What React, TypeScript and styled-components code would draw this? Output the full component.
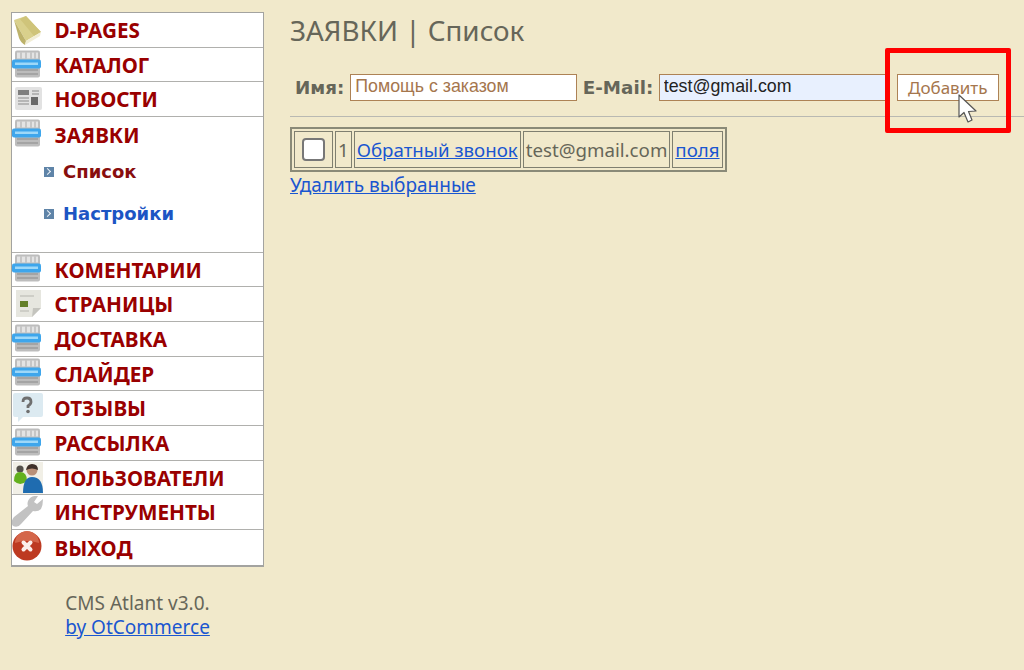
import React from "react";
import styled, { createGlobalStyle } from "styled-components";

const GlobalStyle = createGlobalStyle`
  html, body {
    margin: 0;
    padding: 0;
    background: #f1e9cb;
  }
  body {
    font-family: "Noto Sans", Tahoma, sans-serif;
    color: #666659;
  }
`;

const BookIcon = () => (
  <svg width="32" height="32" viewBox="0 0 32 32">
    <path d="M2 6 L14 2 L29 18 L14 27 Z" fill="#d9d08c" />
    <path d="M14 2 L29 18 L22 22 L8 5 Z" fill="#cfc47a" />
    <path d="M2 6 L14 27 L13 31 Q9 29 7 24 Z" fill="#bdb26a" />
    <path d="M14 27 L29 18 L28 22 L13 31 Z" fill="#f2eed6" />
  </svg>
);

const TableIcon = () => (
  <svg width="32" height="32" viewBox="0 0 32 32">
    <rect x="3" y="1.5" width="25" height="27" rx="2" fill="#bdbdbd" />
    <rect x="5" y="3.5" width="21" height="6" fill="#e4e4e4" />
    <path d="M9 3.5v6M14 3.5v6M19 3.5v6M23 3.5v6" stroke="#a8a8a8" />
    <rect x="5" y="20" width="21" height="6" fill="#a4a4a4" />
    <path d="M5 23h21" stroke="#d4d4d4" />
    <rect x="0" y="10.5" width="29" height="9" rx="2" fill="#3ea6ec" />
    <rect x="3" y="13.5" width="23" height="2.5" fill="#9ed8f8" />
  </svg>
);

const NewsIcon = () => (
  <svg width="32" height="32" viewBox="0 0 32 32">
    <rect x="3" y="4" width="27" height="23" rx="2" fill="#e2e2e2" />
    <rect x="6" y="7" width="11" height="5" fill="#7f7f7f" />
    <path d="M6 15h11M6 18h11M6 21h11M20 8h7M20 11h7" stroke="#a8a8a8" strokeWidth="1.3" />
    <rect x="19" y="14" width="7" height="8" fill="#6a6a6a" />
  </svg>
);

const PageIcon = () => (
  <svg width="32" height="32" viewBox="0 0 32 32">
    <path d="M4 2 H29 V20 L20 29 H4 Z" fill="#e6e6df" />
    <path d="M20 29 L21 20 H29 Z" fill="#c4c4be" />
    <path d="M8 13h8v6H8z" fill="#64802a" />
    <path d="M8 8h14M8 23h9" stroke="#c6c6c0" strokeWidth="1.3" />
  </svg>
);

const QuestionIcon = () => (
  <svg width="32" height="32" viewBox="0 0 32 32">
    <path d="M3 1 H29 Q31 1 31 3 V23 Q31 25 29 25 H11 L6 30 V25 H3 Q1 25 1 23 V3 Q1 1 3 1 Z" fill="#dceaf1" />
    <path d="M11 10 Q11 6 15 6 Q19 6 19 10 Q19 12 16 14 V16" fill="none" stroke="#6f6f6f" strokeWidth="2.8" />
    <circle cx="16" cy="19.5" r="1.8" fill="#6f6f6f" />
  </svg>
);

const UsersIcon = () => (
  <svg width="32" height="32" viewBox="0 0 32 32">
    <rect x="1" width="30" height="32" fill="#f1efe6" />
    <circle cx="8" cy="7" r="3.6" fill="#54504a" />
    <path d="M2 19 Q2 10 8 10 Q15 10 15 19 Q8 25 2 19 Z" fill="#63b01e" />
    <circle cx="20" cy="8" r="5.5" fill="#b99078" />
    <path d="M14 8 Q15 2 20 2 Q26 2 26 8 Q20 5 14 8 Z" fill="#3f3029" />
    <path d="M11 31 Q11 15 20 15 Q31 15 31 31 Z" fill="#1f6cb0" />
  </svg>
);

const WrenchIcon = () => (
  <svg width="32" height="32" viewBox="0 0 32 32">
    <path d="M31 3 L25 8 L22 6 L26 0 Q19 -1 16 5 Q15 8 16 10 L2 21 Q-2 26 1 30 Q6 32 9 28 L21 15 Q26 16 29 13 Q31 9 31 3 Z" fill="#c2c2c2" />
  </svg>
);

const ExitIcon = () => (
  <svg width="32" height="32" viewBox="0 0 32 32">
    <circle cx="15" cy="15" r="14.5" fill="#bd3a21" />
    <path d="M3 12 A12 12 0 0 1 27 12 Q15 8 3 12 Z" fill="#d4664a" />
    <path d="M11.5 11.5 L18.5 18.5 M18.5 11.5 L11.5 18.5" stroke="#fbeee9" strokeWidth="4" strokeLinecap="round" />
  </svg>
);

const menuTop = [
  { label: "D-PAGES", icon: <BookIcon /> },
  { label: "КАТАЛОГ", icon: <TableIcon /> },
  { label: "НОВОСТИ", icon: <NewsIcon /> },
];

const menuBottom = [
  { label: "КОМЕНТАРИИ", icon: <TableIcon /> },
  { label: "СТРАНИЦЫ", icon: <PageIcon /> },
  { label: "ДОСТАВКА", icon: <TableIcon /> },
  { label: "СЛАЙДЕР", icon: <TableIcon /> },
  { label: "ОТЗЫВЫ", icon: <QuestionIcon /> },
  { label: "РАССЫЛКА", icon: <TableIcon /> },
  { label: "ПОЛЬЗОВАТЕЛИ", icon: <UsersIcon /> },
  { label: "ИНСТРУМЕНТЫ", icon: <WrenchIcon /> },
  { label: "ВЫХОД", icon: <ExitIcon /> },
];

const App: React.FC = () => {
  return (
    <Page>
      <GlobalStyle />
      <Side>
        <Menu>
          {menuTop.map((item) => (
            <MenuRow key={item.label}>
              <IconBox>{item.icon}</IconBox>
              <MenuLabel>{item.label}</MenuLabel>
            </MenuRow>
          ))}
          <OpenGroup>
            <MenuRow>
              <IconBox>
                <TableIcon />
              </IconBox>
              <MenuLabel>ЗАЯВКИ</MenuLabel>
            </MenuRow>
            <SubList>
              <SubItem>
                <Bullet />
                <SubLabel $active>Список</SubLabel>
              </SubItem>
              <SubItem>
                <Bullet />
                <SubLabel>Настройки</SubLabel>
              </SubItem>
            </SubList>
          </OpenGroup>
          {menuBottom.map((item) => (
            <MenuRow key={item.label}>
              <IconBox>{item.icon}</IconBox>
              <MenuLabel>{item.label}</MenuLabel>
            </MenuRow>
          ))}
        </Menu>
        <Credits>
          CMS Atlant v3.0.
          <br />
          <Link href="#">by OtCommerce</Link>
        </Credits>
      </Side>

      <Main>
        <Title>ЗАЯВКИ | Список</Title>
        <AddForm>
          <FieldLabel>Имя:</FieldLabel>
          <TextInput defaultValue="Помощь с заказом" />
          <FieldLabel>E-Mail:</FieldLabel>
          <TextInput $autofill defaultValue="test@gmail.com" />
          <AddButton type="button">Добавить</AddButton>
        </AddForm>
        <Rule />
        <OrdersTable>
          <tbody>
            <tr>
              <CheckCell>
                <CheckBox />
              </CheckCell>
              <Cell>1</Cell>
              <Cell>
                <Link href="#">Обратный звонок</Link>
              </Cell>
              <Cell>test@gmail.com</Cell>
              <Cell>
                <Link href="#">поля</Link>
              </Cell>
            </tr>
          </tbody>
        </OrdersTable>
        <DeleteLink href="#">Удалить выбранные</DeleteLink>
      </Main>

      <Highlight />
      <Pointer viewBox="0 0 22 30" width="22" height="30">
        <path
          d="M2 1 L2 23 L7 18.5 L11 28 L15 26 L11.5 17.5 L19 17 Z"
          fill="#fff"
          stroke="#555"
          strokeWidth="1.2"
          strokeLinejoin="round"
        />
      </Pointer>
    </Page>
  );
};

export default App;

const Page = styled.div`
  position: relative;
  display: flex;
  align-items: flex-start;
  width: 1024px;
  height: 670px;
  overflow: hidden;
  padding: 12px 0 0 11px;
  box-sizing: border-box;
  background: #f1e9cb;
`;

const Side = styled.div`
  width: 253px;
  flex: none;
`;

const Menu = styled.div`
  background: #fff;
  border: 1px solid #a3a3a0;
  border-bottom-width: 2px;
`;

const MenuRow = styled.div`
  display: flex;
  align-items: center;
  height: 34.7px;
  box-sizing: border-box;
  border-bottom: 1px solid #b0b0ad;
  &:last-child {
    border-bottom: none;
  }
`;

const IconBox = styled.div`
  display: flex;
  width: 42.5px;
  flex: none;
  filter: blur(0.6px);
`;

const MenuLabel = styled.span`
  font-family: "Noto Sans", sans-serif;
  font-size: 20.7px;
  font-weight: 700;
  color: #990000;
  line-height: 1;
  padding-top: 1px;
`;

const OpenGroup = styled.div`
  height: 135.5px;
  box-sizing: border-box;
  border-bottom: 1px solid #b0b0ad;
  ${MenuRow} {
    border-bottom: none;
  }
`;

const SubList = styled.div`
  display: flex;
  flex-direction: column;
  gap: 18px;
  padding: 8px 0 0 32px;
`;

const SubItem = styled.div`
  display: flex;
  align-items: center;
  gap: 9px;
  height: 24px;
`;

const Bullet = styled.span`
  position: relative;
  width: 10px;
  height: 10px;
  background: #5f84a8;
  &::after {
    content: "";
    position: absolute;
    left: 2px;
    top: 2px;
    width: 4px;
    height: 4px;
    border-top: 1.5px solid #eef3f7;
    border-right: 1.5px solid #eef3f7;
    transform: translateX(-1px) rotate(45deg);
  }
`;

const SubLabel = styled.span<{ $active?: boolean }>`
  font-family: "DejaVu Sans", sans-serif;
  font-size: 18px;
  font-weight: 700;
  color: ${(p) => (p.$active ? "#880e0e" : "#1c55c4")};
`;

const Credits = styled.div`
  margin-top: 24px;
  text-align: center;
  font-size: 19px;
  line-height: 24px;
  color: #666659;
`;

const Link = styled.a`
  color: #1a56d0;
  text-decoration: underline;
`;

const DeleteLink = styled(Link)`
  font-size: 19px;
`;

const Main = styled.div`
  flex: 1;
  padding: 0 0 0 26px;
  font-size: 18.7px;
  line-height: 25px;
`;

const Title = styled.h1`
  margin: 0;
  font-size: 27.8px;
  line-height: 37px;
  font-weight: 400;
  color: #666659;
`;

const AddForm = styled.form`
  display: flex;
  align-items: center;
  height: 30px;
  margin: 23px 0 0 5px;
`;

const FieldLabel = styled.label`
  font-family: "DejaVu Sans", sans-serif;
  font-size: 18.3px;
  font-weight: 700;
  color: #666659;
  margin-right: 6px;
  & ~ & {
    margin-left: 5.5px;
    margin-right: 5.5px;
  }
`;

const TextInput = styled.input<{ $autofill?: boolean }>`
  width: 227px;
  height: 27px;
  box-sizing: border-box;
  padding: 0 4px 2px;
  border: 1px solid #ad8255;
  border-radius: 0;
  outline: none;
  font-family: "Liberation Sans", sans-serif;
  font-size: 17.8px;
  color: ${(p) => (p.$autofill ? "#222" : "#a5764d")};
  background: ${(p) => (p.$autofill ? "#e8f0fe" : "#fff")};
`;

const AddButton = styled.button`
  width: 102px;
  height: 27px;
  margin: 1px 0 0 11px;
  padding: 0;
  border: 1px solid #ad8255;
  border-radius: 0;
  background: #fff;
  font-family: "Noto Sans", sans-serif;
  font-size: 17px;
  color: #a5764d;
`;

const Rule = styled.div`
  height: 1px;
  margin-top: 14px;
  background: #b9b9b2;
`;

const OrdersTable = styled.table`
  margin-top: 10px;
  border: 2px solid #8a8a78;
  border-spacing: 2.5px;
  border-collapse: separate;
`;

const Cell = styled.td`
  border: 1px solid #7f7f70;
  padding: 0 2px;
  height: 37px;
  box-sizing: border-box;
  line-height: 25px;
  white-space: nowrap;
`;

const CheckCell = styled(Cell)`
  width: 39px;
  text-align: center;
  padding: 0;
`;

const CheckBox = styled.span`
  display: block;
  width: 19px;
  height: 19px;
  margin: 0 auto;
  background: #fff;
  border: 2px solid #777;
  border-radius: 4px;
`;

const Highlight = styled.div`
  position: absolute;
  left: 885px;
  top: 48px;
  width: 126px;
  height: 85px;
  box-sizing: border-box;
  border: 5px solid #ff0000;
  border-radius: 2px;
`;

const Pointer = styled.svg`
  position: absolute;
  left: 957px;
  top: 94px;
`;
